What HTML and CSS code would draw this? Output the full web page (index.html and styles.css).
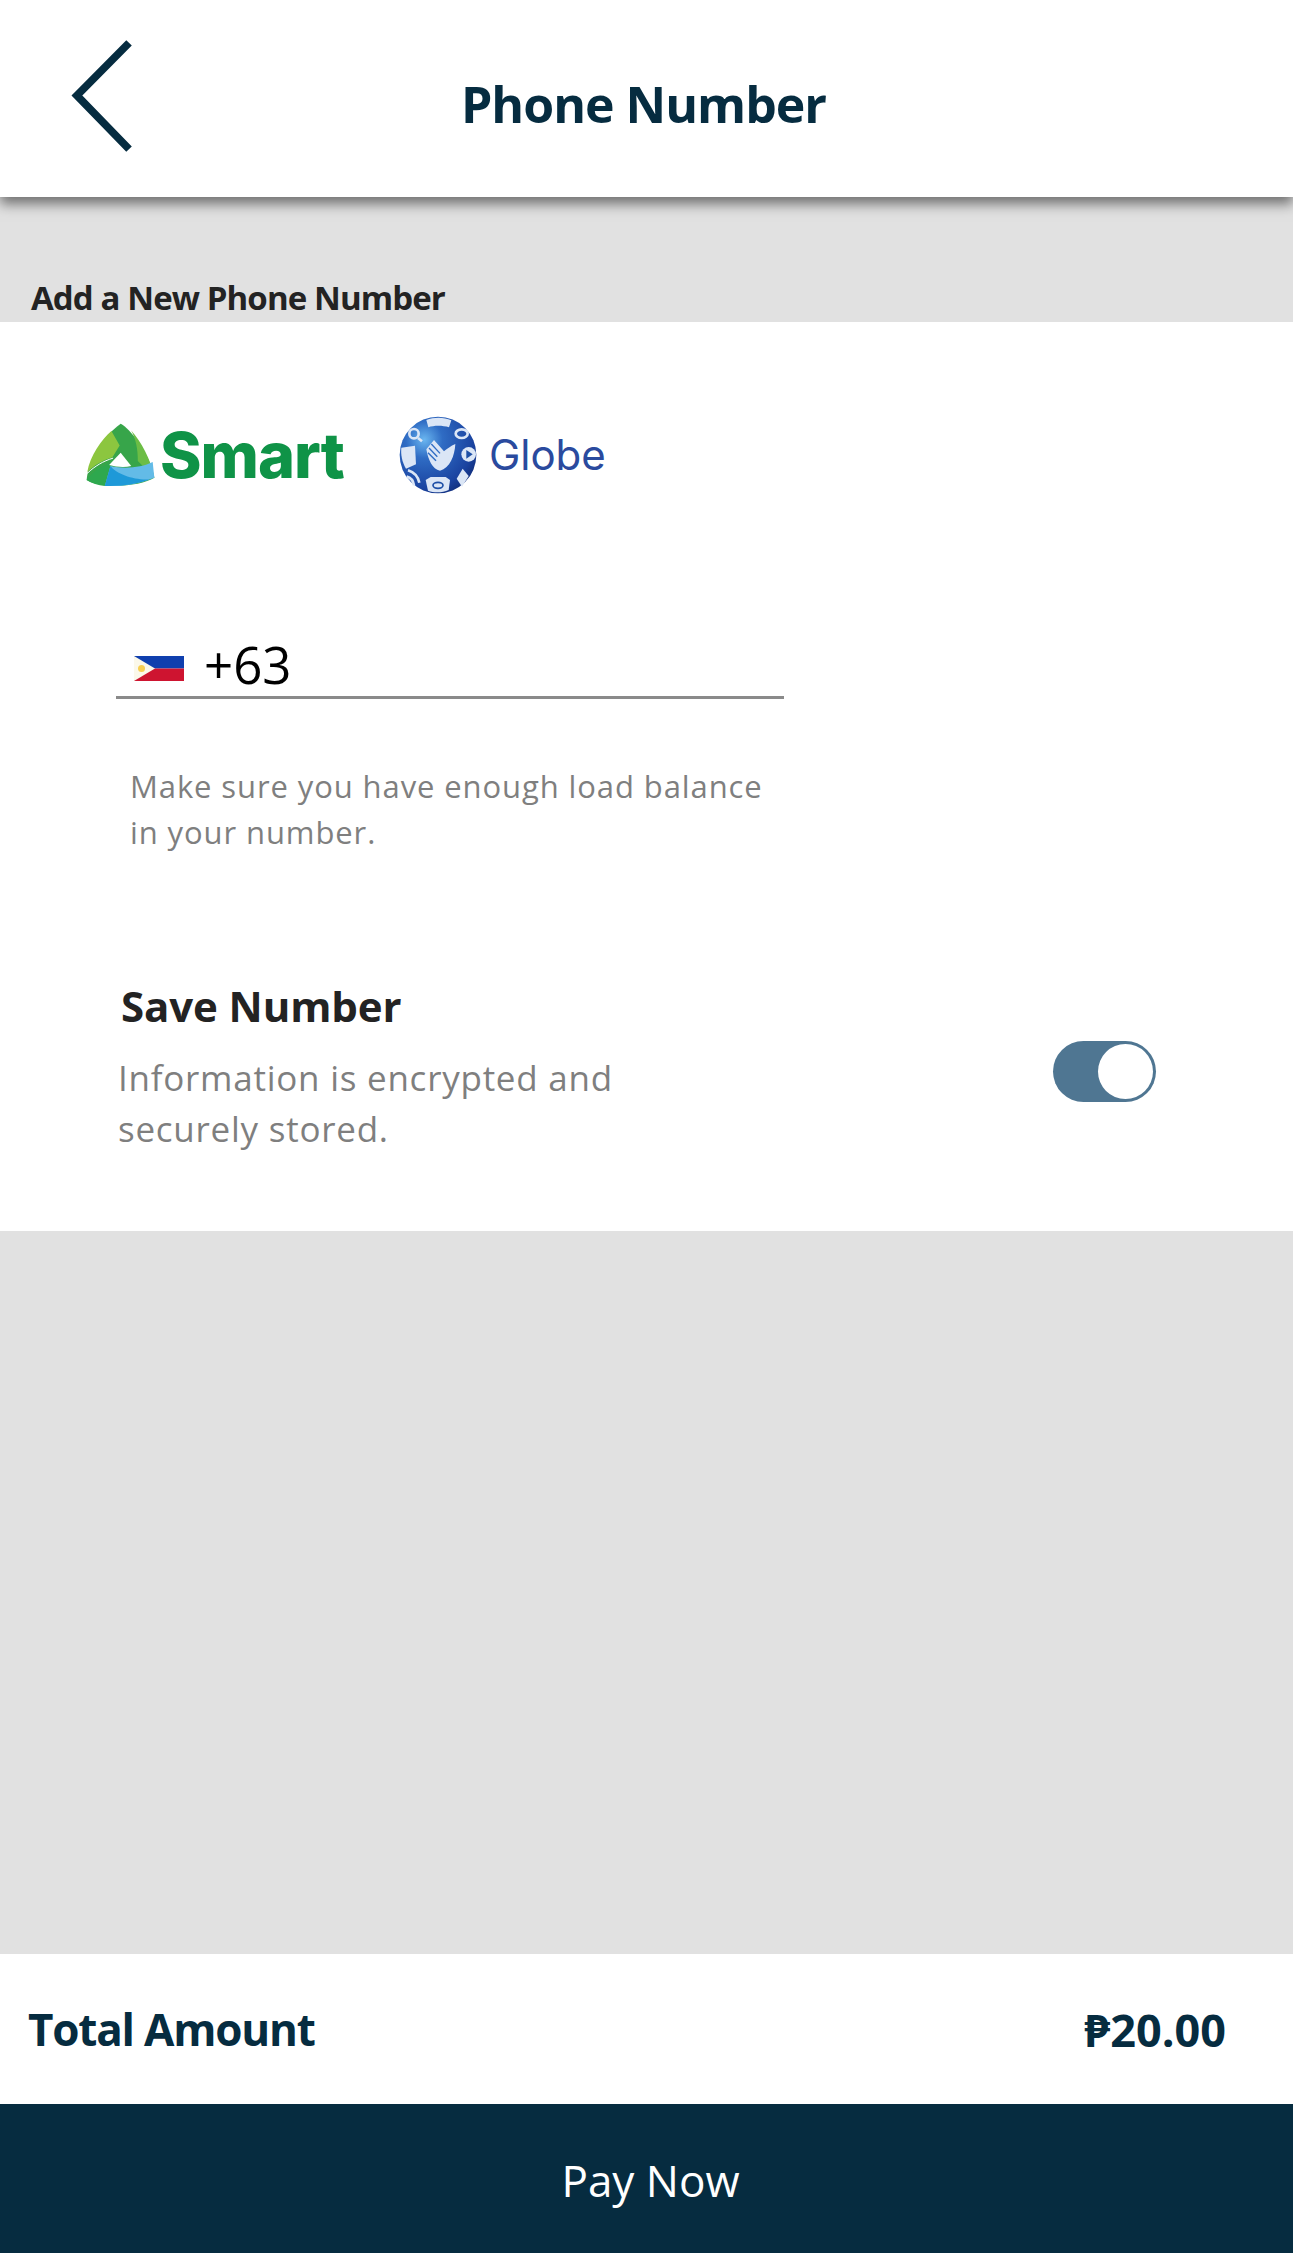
FILE: index.html
```html
<!DOCTYPE html>
<html lang="en">
<head>
<meta charset="utf-8">
<title>Phone Number</title>
<link rel="stylesheet" href="styles.css">
</head>
<body>
<div class="page">
  <header class="topbar">
    <svg class="back" viewBox="0 0 64 116" aria-hidden="true"><path d="M60 3 L6 57.500 L60 113" fill="none" stroke="#062c40" stroke-width="8"/></svg>
    <h1 class="title">Phone Number</h1>
  </header>
  <div class="section-head"><h2 class="section-title">Add a New Phone Number</h2></div>
  <main class="card">
    <div class="logos">
      <div class="logo smart">
        <svg class="smart-mark" viewBox="45 58 215 200" aria-hidden="true">
          <path d="M153 62C180 75 240 150 255 225C215 250 100 262 50 232C55 170 100 100 153 62Z" fill="#37a54a"/>
          <path d="M185 82C215 115 245 170 255 225L205 175C205 140 200 110 185 82Z" fill="#6cbd45"/>
          <path d="M125 84C95 110 60 160 52 208C75 185 100 172 128 163L150 128Z" fill="#8cc63f"/>
          <path d="M50 232C70 205 95 190 122 183L105 250C85 248 65 242 50 232Z" fill="#2ea84e"/>
          <path d="M122 190C165 200 215 195 250 178L255 225C205 245 155 252 105 250Z" fill="#63bbe7"/>
          <path d="M122 190C140 215 200 235 243 230C200 245 155 252 105 250Z" fill="#1e99d8"/>
          <path d="M153 150L185 190C165 195 140 193 118 187Z" fill="#fff"/>
          <path d="M52 212C75 190 100 175 130 166" fill="none" stroke="#fff" stroke-width="3"/>
        </svg>
        <span class="smart-word">Smart</span>
      </div>
      <div class="logo globe">
        <svg class="globe-mark" viewBox="52 47 240 240" aria-hidden="true">
          <defs>
            <radialGradient id="sphere" cx="0.32" cy="0.3" r="0.8">
              <stop offset="0" stop-color="#6ab6f0"/>
              <stop offset="0.3" stop-color="#2f6cc4"/>
              <stop offset="0.8" stop-color="#1a43a0"/>
              <stop offset="1" stop-color="#102c78"/>
            </radialGradient>
          </defs>
          <circle cx="172" cy="167" r="115" fill="url(#sphere)"/>
          <g fill="#dbe6f6">
            <path d="M137 62C160 53 190 53 212 63L205 84C185 78 160 78 143 84Z"/>
            <path d="M62 145L103 139L106 195L76 208C64 188 60 165 62 145Z"/>
            <path d="M135 242L150 233H195L208 242L204 272C185 281 160 281 142 274Z"/>
            <path d="M137 150L160 122L190 156C200 148 210 140 224 134C222 170 208 206 178 214C155 210 143 182 137 150Z"/>
            <circle cx="264" cy="165" r="22"/>
            <path d="M228 238L246 208L264 230L244 262Z"/>
          </g>
          <g fill="none" stroke="#2f6cc4" stroke-width="4">
            <path d="M152 134L178 162"/>
            <path d="M145 146L170 172"/>
            <path d="M142 160L166 184"/>
          </g>
          <g fill="none" stroke="#dbe6f6" stroke-width="8">
            <circle cx="100" cy="103" r="14"/>
            <path d="M112 116L124 126"/>
            <ellipse cx="243" cy="103" rx="18" ry="13"/>
            <path d="M82 213C98 218 112 232 116 250"/>
            <path d="M78 232C90 235 98 245 100 258"/>
          </g>
          <path d="M257 152L276 165L257 178Z" fill="#1d4fa6"/>
          <ellipse cx="172" cy="258" rx="15" ry="9" fill="none" stroke="#1d4fa6" stroke-width="5"/>
        </svg>
        <span class="globe-word">Globe</span>
      </div>
    </div>
    <div class="phone-field">
      <svg class="flag" viewBox="0 0 50 25" aria-hidden="true">
        <rect width="50" height="12.500" fill="#0f3fae"/>
        <rect y="12.500" width="50" height="12.500" fill="#ce1430"/>
        <path d="M0 0L21 12.500L0 25Z" fill="#fbf8ea"/>
        <circle cx="7.500" cy="12.500" r="3.500" fill="#f7cf52"/>
      </svg>
      <span class="dial-code">+63</span>
    </div>
    <p class="hint">Make sure you have enough load balance<br>in your number.</p>
    <div class="save-row">
      <div class="save-copy">
        <h3 class="save-title">Save Number</h3>
        <p class="save-text">Information is encrypted and<br>securely stored.</p>
      </div>
      <div class="toggle"><span class="knob"></span></div>
    </div>
  </main>
  <div class="spacer"></div>
  <div class="total-row">
    <span class="total-label">Total Amount</span>
    <span class="total-value">₱20.00</span>
  </div>
  <button class="pay" type="button">Pay Now</button>
</div>
</body>
</html>
```

FILE: styles.css
```css
* { box-sizing: border-box; }

html, body {
  margin: 0;
  padding: 0;
  background: #e1e1e1;
}

body {
  font-family: "Open Sans", "Noto Sans", "DejaVu Sans", sans-serif;
}

.page {
  width: 1293px;
  height: 2253px;
  display: flex;
  flex-direction: column;
  overflow: hidden;
}

.topbar {
  position: relative;
  z-index: 1;
  flex: 0 0 197px;
  background: #fff;
  display: flex;
  align-items: center;
  justify-content: center;
  box-shadow: 0 7px 12px rgba(0, 0, 0, 0.5);
}

.back {
  position: absolute;
  left: 71px;
  top: 40px;
  width: 62px;
  height: 112px;
}

.title {
  margin: 0 6px -10px 0;
  font-size: 50px;
  line-height: 1.2;
  font-weight: 700;
  color: #062c40;
  letter-spacing: -1px;
}

.section-head {
  flex: 0 0 125px;
  display: flex;
  align-items: flex-end;
  padding: 0 0 2px 31px;
}

.section-title {
  margin: 0;
  font-size: 33px;
  line-height: 44px;
  font-weight: 700;
  color: #232323;
  letter-spacing: -0.9px;
}

.card {
  flex: 0 0 909px;
  background: #fff;
  padding: 93px 0 0;
}

.logos {
  display: flex;
  align-items: center;
  padding-left: 85px;
  height: 80px;
}

.logo {
  display: flex;
  align-items: center;
}

.smart-mark {
  width: 71px;
  height: 67px;
  flex: none;
}

.smart-word {
  margin-left: 4px;
  font-family: Inter, "Open Sans", sans-serif;
  font-size: 63px;
  line-height: 1;
  font-weight: 800;
  color: #0f9347;
  letter-spacing: -1px;
}

.globe {
  margin-left: 54px;
}

.globe-mark {
  width: 80px;
  height: 80px;
  flex: none;
}

.globe-word {
  margin-left: 11px;
  font-family: Inter, "Open Sans", sans-serif;
  font-size: 42px;
  line-height: 1;
  font-weight: 400;
  color: #2a4a9e;
}

.phone-field {
  display: flex;
  align-items: center;
  width: 668px;
  height: 66px;
  margin: 138px 0 0 116px;
  padding: 2px 0 2px 18px;
  border-bottom: 3px solid #8a8a8a;
}

.flag {
  width: 50px;
  height: 25px;
  flex: none;
  margin-top: 8px;
}

.dial-code {
  margin-left: 20px;
  font-size: 51px;
  line-height: 1;
  color: #000;
}

.hint {
  margin: 64px 0 0 130px;
  font-size: 31px;
  line-height: 46px;
  letter-spacing: 0.9px;
  color: #7f7f7f;
}

.save-row {
  display: flex;
  justify-content: space-between;
  align-items: flex-start;
  margin: 124px 137px 0 118px;
}

.save-title {
  margin: 0 0 0 3px;
  font-size: 42px;
  line-height: 54px;
  font-weight: 700;
  color: #232323;
  letter-spacing: -0.1px;
}

.save-text {
  margin: 19px 0 0;
  font-size: 35px;
  line-height: 51px;
  letter-spacing: 0.75px;
  color: #7f7f7f;
}

.toggle {
  width: 103px;
  height: 61px;
  margin-top: 62px;
  padding: 3px;
  display: flex;
  justify-content: flex-end;
  border-radius: 31px;
  background: #4f7692;
}

.knob {
  width: 55px;
  height: 55px;
  border-radius: 50%;
  background: #fff;
}

.spacer {
  flex: 1 1 auto;
}

.total-row {
  flex: 0 0 150px;
  background: #fff;
  display: flex;
  align-items: center;
  justify-content: space-between;
  padding: 0 67px 0 28px;
  color: #062c40;
  font-size: 44px;
  font-weight: 700;
}

.total-label {
  letter-spacing: -1.2px;
}

.total-value {
  font-size: 45px;
}

.pay {
  flex: 0 0 149px;
  width: 100%;
  border: 0;
  padding: 3px 0 0 8px;
  background: #062c40;
  color: #fff;
  font-family: inherit;
  font-size: 44px;
  font-weight: 400;
}
```
